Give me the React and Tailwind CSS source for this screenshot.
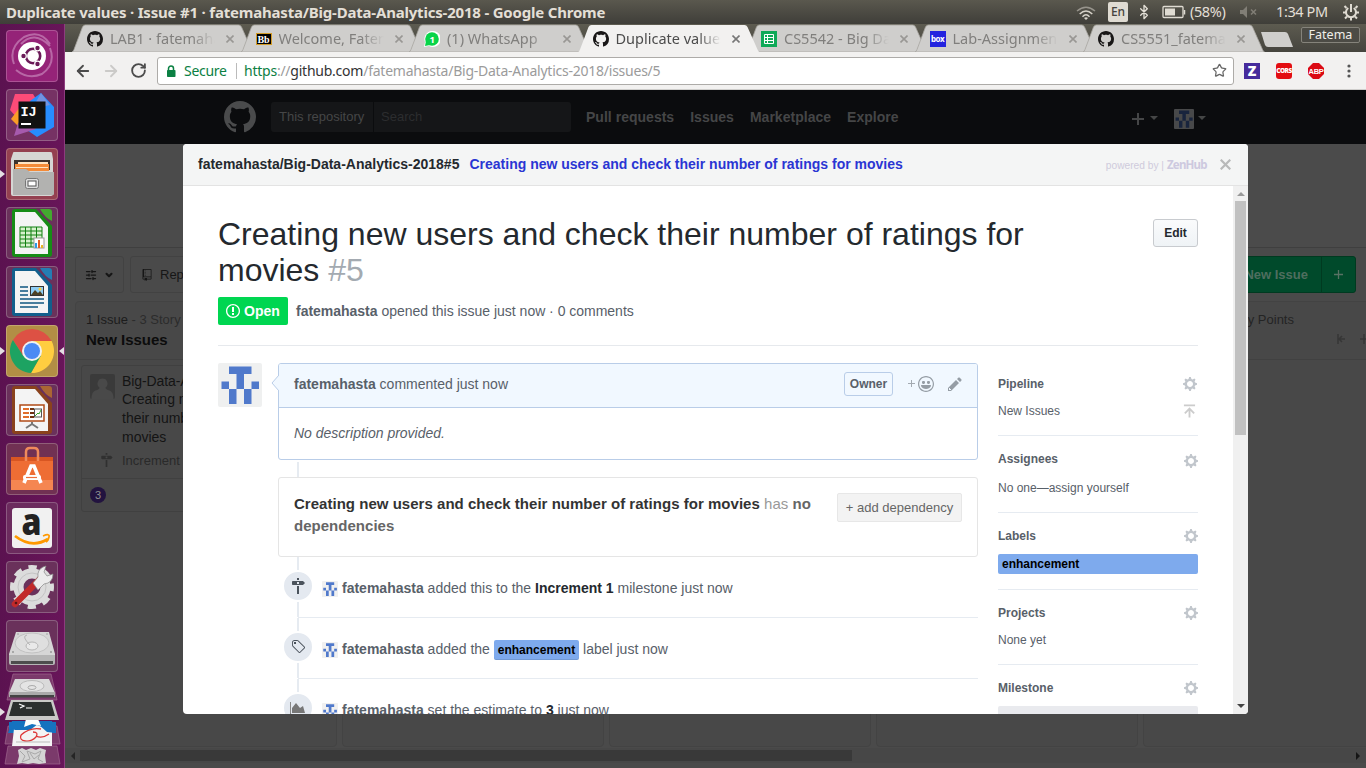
import React from "react";
import { Bluetooth, ArrowLeft, ArrowRight, RotateCw, Star, SlidersHorizontal, ChevronDown } from "lucide-react";

const UI = "font-['Noto_Sans',sans-serif]";

const PATHS = {
  github: "M8 0C3.58 0 0 3.58 0 8c0 3.54 2.29 6.53 5.47 7.59.4.07.55-.17.55-.38 0-.19-.01-.82-.01-1.49-2.01.37-2.53-.49-2.69-.94-.09-.23-.48-.94-.82-1.13-.28-.15-.68-.52-.01-.53.63-.01 1.08.58 1.23.82.72 1.21 1.87.87 2.33.66.07-.52.28-.87.51-1.07-1.78-.2-3.64-.89-3.64-3.95 0-.87.31-1.59.82-2.15-.08-.2-.36-1.02.08-2.12 0 0 .67-.21 2.2.82.64-.18 1.32-.27 2-.27.68 0 1.36.09 2 .27 1.53-1.04 2.2-.82 2.2-.82.44 1.1.16 1.92.08 2.12.51.56.82 1.27.82 2.15 0 3.07-1.87 3.75-3.65 3.95.29.25.54.73.54 1.48 0 1.07-.01 1.93-.01 2.2 0 .21.15.46.55.38A8.013 8.013 0 0 0 16 8c0-4.42-3.58-8-8-8z",
  issue: "M7 2.3c3.14 0 5.7 2.56 5.7 5.7s-2.56 5.7-5.7 5.7A5.71 5.71 0 0 1 1.3 8c0-3.14 2.56-5.7 5.7-5.7zM7 1C3.14 1 0 4.14 0 8s3.14 7 7 7 7-3.14 7-7-3.14-7-7-7zm1 3H6v5h2V4zm0 6H6v2h2v-2z",
  gear: "M14 8.77v-1.6l-1.94-.64-.45-1.09.88-1.84-1.13-1.13-1.81.91-1.09-.45-.69-1.92h-1.6l-.63 1.94-1.11.45-1.84-.88-1.13 1.13.91 1.81-.45 1.09L0 7.23v1.59l1.94.64.45 1.09-.88 1.84 1.13 1.13 1.81-.91 1.09.45.69 1.92h1.59l.63-1.94 1.11-.45 1.84.88 1.13-1.13-.92-1.81.47-1.09L14 8.75v.02zM7 11c-1.66 0-3-1.34-3-3s1.34-3 3-3 3 1.34 3 3-1.34 3-3 3z",
  milestone: "M8 2H6V0h2v2zm4 5H2c-.55 0-1-.45-1-1V4c0-.55.45-1 1-1h10l2 2-2 2zM8 4H6v2h2V4zM6 16h2V8H6v8z",
  tag: "M7.73 1.73C7.26 1.26 6.62 1 5.96 1H3.5C2.13 1 1 2.13 1 3.5v2.47c0 .66.27 1.3.73 1.77l6.06 6.06c.39.39 1.02.39 1.41 0l4.59-4.59a.996.996 0 0 0 0-1.41L7.73 1.73zM2.38 7.09c-.31-.3-.47-.7-.47-1.13V3.5c0-.88.72-1.59 1.59-1.59h2.47c.42 0 .83.16 1.13.47l6.14 6.13-4.73 4.73-6.13-6.15zM3.01 3h2v2H3V3h.01z",
  pencil: "M0 12v3h3l8-8-3-3-8 8zm3 2H1v-2h1v1h1v1zm10.3-9.3L12 6 9 3l1.3-1.3a.996.996 0 0 1 1.41 0l1.59 1.59c.39.39.39 1.02 0 1.41z",
  smiley: "M8 0C3.58 0 0 3.58 0 8s3.58 8 8 8 8-3.58 8-8-3.58-8-8-8zm4.81 12.81a6.72 6.72 0 0 1-2.17 1.45c-.83.36-1.72.53-2.64.53-.92 0-1.81-.17-2.64-.53-.81-.34-1.55-.83-2.17-1.45a6.773 6.773 0 0 1-1.45-2.17A6.59 6.59 0 0 1 1.21 8c0-.92.17-1.81.53-2.64.34-.81.83-1.55 1.45-2.17.62-.62 1.36-1.11 2.17-1.45A6.59 6.59 0 0 1 8 1.21c.92 0 1.81.17 2.64.53.81.34 1.55.83 2.17 1.45.62.62 1.11 1.36 1.45 2.17.36.83.53 1.72.53 2.64 0 .92-.17 1.81-.53 2.64-.34.81-.83 1.55-1.45 2.17zM4 6.8v-.59c0-.66.53-1.19 1.2-1.19h.59c.66 0 1.19.53 1.19 1.19v.59c0 .67-.53 1.2-1.19 1.2H5.2C4.53 8 4 7.47 4 6.8zm5 0v-.59c0-.66.53-1.19 1.2-1.19h.59c.66 0 1.19.53 1.19 1.19v.59c0 .67-.53 1.2-1.19 1.2h-.59C9.53 8 9 7.47 9 6.8zm4 3.2c-.72 1.88-2.91 3-5 3s-4.28-1.13-5-3c-.14-.39.23-1 .66-1h8.59c.41 0 .89.61.75 1z",
  repo: "M4 9H3V8h1v1zm0-3H3v1h1V6zm0-2H3v1h1V4zm0-2H3v1h1V2zm8-1v12c0 .55-.45 1-1 1H6v2l-1.5-1.5L3 16v-2H1c-.55 0-1-.45-1-1V1c0-.55.45-1 1-1h10c.55 0 1 .45 1 1zm-1 10H1v2h2v-1h3v1h5v-2zm0-10H2v9h9V1z",
};

function Octicon({ name, w = 14, className = "" }) {
  return (
    <svg viewBox={`0 0 ${w} 16`} className={`shrink-0 ${className}`} fill="currentColor">
      <path fillRule="evenodd" d={PATHS[name]} />
    </svg>
  );
}

function Identicon({ className = "", bg = "#f0f0f0", fg = "#5079cb" }) {
  return (
    <svg viewBox="0 0 44 44" className={`shrink-0 ${className}`}>
      <rect width="44" height="44" rx="2" fill={bg} />
      <path fill={fg} d="M11 3.500h22.500v7.500H26v15h7.500v-7.500H41V26h-7.500v15H26V26h-7.500v15H11V26H3.500v-7.500H11V26h7.500V11H11z" />
    </svg>
  );
}

/* ---------- desktop panel ---------- */

function TopBar() {
  return (
    <header className={`flex h-6 shrink-0 items-center bg-linear-to-b from-[#5a584e] to-[#3f3e39] text-[#e3dfd6] ${UI}`}>
      <h1 className="ml-1.5 w-[700px] text-[15px] leading-6 font-bold tracking-[-0.2px] whitespace-nowrap">
        Duplicate values · Issue #1 · fatemahasta/Big-Data-Analytics-2018 - Google Chrome
      </h1>
      <div className="ml-auto flex items-center pr-1.5 text-[14.500px]">
        <svg viewBox="0 0 20 14" className="mt-0.5 mr-3 h-3.5 w-5" fill="none" stroke="#d8d4cb" strokeWidth="1.500">
          <path d="M1 5Q10-2.500 19 5" stroke="#97948c" />
          <path d="M3.700 8Q10 2 16.300 8M6.500 10.700Q10 7 13.500 10.700" />
          <path d="M8 12L10 14L12 12Q10 10.500 8 12" fill="#d8d4cb" stroke="none" />
        </svg>
        <span className="mr-2 flex h-5 w-5 items-center justify-center rounded-xs bg-[#dfdbd2] text-[12px] font-medium text-[#45433e]">En</span>
        <Bluetooth className="mr-2.5 h-4 w-4 shrink-0" strokeWidth={2} />
        <svg viewBox="0 0 24 14" className="mr-1 h-3.5 w-6" fill="none" stroke="#dfdbd2">
          <rect x="1" y="1.500" width="20" height="11" rx="1" strokeWidth="1.300" />
          <path d="M22.500 5v4.500" strokeWidth="1.500" />
          <rect x="3" y="3.500" width="10" height="7" fill="#dfdbd2" stroke="none" />
        </svg>
        <span className="w-[38px] tracking-[-0.4px] whitespace-nowrap">(58%)</span>
        <svg viewBox="0 0 18 12" className="mr-[18px] ml-3 h-3 w-[18px]" fill="#817e76" stroke="#817e76">
          <path d="M0 4h3l4-4v12L3 8H0z" stroke="none" />
          <path d="M11 3.500l5 5m0-5l-5 5" strokeWidth="1.500" />
        </svg>
        <span className="w-[53px] tracking-[-0.4px] whitespace-nowrap">1:34 PM</span>
        <svg viewBox="0 0 18 18" className="ml-[13px] h-[18px] w-[18px]" fill="none" stroke="#dfdbd2">
          <path d="M6.300 5A5 5 0 1 0 11.700 5" strokeWidth="2" />
          <path d="M9 1v8" strokeWidth="2" />
          <path d="M2.500 3l2 2M15.500 3l-2 2M1 9.500h3M14 9.500h3M3 15.500l2-2M15 15.500l-2-2M9 14v3.500" strokeWidth="2" />
        </svg>
      </div>
    </header>
  );
}

function LauncherTile({ tint, children, left, right }) {
  return (
    <div className={`relative h-[52px] w-[52px] shrink-0 rounded-[4px] border border-[#ffffff38] ${tint}`}>
      <svg viewBox="0 0 52 52" className="-m-px h-[52px] w-[52px] max-w-none">{children}</svg>
      {left && <svg viewBox="0 0 5 8" className="absolute top-[21px] -left-[7px] h-2 w-[5px]"><path d="M0 0l5 4l-5 4z" fill="#e4dfe3" /></svg>}
      {right && <svg viewBox="0 0 5 8" className="absolute top-[21px] -right-[7px] h-2 w-[5px]"><path d="M5 0L0 4l5 4z" fill="#e4dfe3" /></svg>}
    </div>
  );
}

function DocShape({ main, fold, children }) {
  return (
    <>
      <path d="M9 2h21l16 17v28a3 3 0 0 1-3 3H9a3 3 0 0 1-3-3V5a3 3 0 0 1 3-3z" fill={main} />
      <path d="M9 5h20l13 15v27H9z" fill="#f4f4f4" />
      <path d="M34 2h9a3 3 0 0 1 3 3v9q-7-3-12-12z" fill={fold} />
      {children}
    </>
  );
}

function Disk() {
  return (
    <g>
      <path d="M10 12h33l6 22v6H3v-6z" fill="#d6d6d6" />
      <path d="M3 35h46v8q0 2-2 2H5q-2 0-2-2z" fill="#b5b5b5" />
      <path d="M5 41h42v3H5z" fill="#4d4d4d" />
      <ellipse cx="26" cy="23" rx="17" ry="10" fill="#dfdfdf" stroke="#c2c2c2" />
      <ellipse cx="26" cy="26" rx="6" ry="4" fill="#e9e9e9" stroke="#b5b5b5" />
      <path d="M24 25q-9-9-3-10" fill="none" stroke="#b5b5b5" />
      <g fill="#999"><circle cx="12" cy="14" r=".8" /><circle cx="41" cy="14" r=".8" /><circle cx="7" cy="32" r="1" /><circle cx="45" cy="32" r="1" /></g>
    </g>
  );
}

function Launcher() {
  return (
    <nav className="relative flex w-[65px] shrink-0 flex-col gap-[7px] overflow-hidden border-r border-[#8d3c7e] bg-linear-to-r from-[#5b1250] to-[#681559] pt-1.5 pl-1.5">
      <LauncherTile tint="bg-[#952378]">
        <g fill="none" stroke="#c885b9" strokeWidth="2" opacity=".7"><path d="M8 34Q2 18 18 7Q34-1 44 14M44 18Q50 34 36 44Q22 50 10 40M15 14Q28 0 44 16" /></g>
        <circle cx="26" cy="26" r="14" fill="#fff" />
        <circle cx="27" cy="26" r="7.200" fill="none" stroke="#6b1a58" strokeWidth="2.600" />
        <g fill="#6b1a58" stroke="#fff" strokeWidth="1.200"><circle cx="17.500" cy="26" r="2.800" /><circle cx="31.500" cy="18" r="2.800" /><circle cx="31.500" cy="34" r="2.800" /></g>
      </LauncherTile>
      <LauncherTile tint="bg-[#763264]">
        <path d="M9 5l18 0 6 10-20 16-9-10z" fill="#fd4b78" /><path d="M5 30l9-12 8 8-10 11z" fill="#f99d27" />
        <path d="M35 4l13 14v20l-17 10-14-10 7-26z" fill="#278dff" /><path d="M12 34l10-4 8 10-22 7z" fill="#a65aad" />
        <path d="M35 4l9 12-18 4z" fill="#7492df" />
        <rect x="12.500" y="12.500" width="27" height="27" fill="#111" />
        <text x="14.500" y="27" fontSize="13.500" fontWeight="700" fontFamily="Liberation Mono, monospace" fill="#fff">IJ</text><path d="M15 35h10" stroke="#fff" strokeWidth="2" />
      </LauncherTile>
      <LauncherTile tint="bg-[#944050]" left>
        <path d="M7 5q0-1 1-1h36q2 0 2 1l1 6v35q0 2-2 2H7q-2 0-2-2V11z" fill="#d6d6d4" />
        <path d="M8 12h36v10H8z" fill="#3b322d" /><path d="M9 16h34v7H9z" fill="#f48b38" /><path d="M12 14h30v2H12zM10 19h32v1H10z" fill="#ffe4c2" />
        <path d="M7 21h13l4 3h24v22q0 1-1 1H7z" fill="#b2b2b0" />
        <rect x="19.500" y="30.500" width="13" height="10" rx="2" fill="#ddd" stroke="#777" /><rect x="22" y="33" width="8" height="5" fill="#fff" stroke="#555" />
      </LauncherTile>
      <LauncherTile tint="bg-[#6a315b]">
        <DocShape main="#168c16" fold="#43a92f">
          <path d="M14 20h22v20H14z" fill="#d7f1cd" /><path d="M14 20h22v20H14zM19.500 20v20M25 20v20M30.500 20v20M14 24h22M14 28h22M14 32h22M14 36h22" stroke="#118011" fill="none" />
          <rect x="28" y="31" width="10" height="10" fill="#fff" stroke="#999" /><path d="M29 36h2v5h-2z" fill="#2b9ae5" /><path d="M32 33h2v8h-2z" fill="#e26025" /><path d="M35 38h2v3h-2z" fill="#e8b52a" />
        </DocShape>
      </LauncherTile>
      <LauncherTile tint="bg-[#6a315b]">
        <DocShape main="#125f8c" fold="#257db3">
          <path d="M14 21h8M14 25h8M14 29h8M14 33h24M14 37h24M14 41h18" stroke="#0f5580" strokeWidth="1.700" />
          <rect x="24.500" y="20.500" width="13" height="9" fill="#8fcdf4" stroke="#333" /><path d="M25 29l4-5 3 3 2-2 3 4z" fill="#4d4023" /><circle cx="34" cy="23" r="1.500" fill="#ffd034" />
        </DocShape>
      </LauncherTile>
      <LauncherTile tint="bg-[#b28e45]" left right>
        <path d="M26 16H45.600A22 22 0 0 1 25 48L34.700 31z" fill="#ffcd40" /><path d="M17.300 31L7 15A22 22 0 0 1 45.600 16H26z" fill="#dd5144" />
        <path d="M17.300 31L6.900 15A22 22 0 0 0 25 48L34.700 31z" fill="#1da362" />
        <circle cx="26" cy="26" r="10" fill="#f1f1f1" /><circle cx="26" cy="26" r="8" fill="#4a8af4" />
      </LauncherTile>
      <LauncherTile tint="bg-[#6a315b]">
        <DocShape main="#8a421d" fold="#aa6634">
          <rect x="14" y="21" width="24" height="16" fill="#fff" stroke="#b04b17" strokeWidth="1.500" /><path d="M17 25h6M17 29h6M17 33h6" stroke="#e16f2c" strokeWidth="2" />
          <path d="M24 25h4M24 29h4M24 33h4" stroke="#713313" strokeWidth="2" /><rect x="28.500" y="25" width="7" height="8" fill="#fff" stroke="#555" /><path d="M29 32l3-3 1 1 2-4" stroke="#3aa832" fill="none" /><path d="M26 38v2l-6 4m6-4l6 4" stroke="#777" strokeWidth="2" fill="none" />
        </DocShape>
      </LauncherTile>
      <LauncherTile tint="bg-[#713153]">
        <path d="M5 14h42v33H5z" fill="#ee6d34" /><path d="M5 37h42v10H5z" fill="#f58651" /><path d="M5 14h42v4H5z" fill="#d85622" />
        <path d="M20 18V9q0-4 4-4h4q4 0 4 4v9" fill="none" stroke="#f08a5c" strokeWidth="2.500" />
        <path d="M18 40l7-17h3l7 17" fill="none" stroke="#fff" strokeWidth="3.600" /><rect x="17" y="32" width="18" height="5" rx="2" fill="#fff" /><path d="M20 34.500h11" stroke="#ed6f3b" strokeWidth="1.200" />
      </LauncherTile>
      <LauncherTile tint="bg-[#6c2b5e]">
        <rect x="6" y="6" width="40" height="40" rx="3" fill="#f1f1f1" />
        <text x="15.500" y="33" fontFamily="Open Sans, sans-serif" fontWeight="800" fontSize="37" textLength="20" lengthAdjust="spacingAndGlyphs" fill="#222">a</text>
        <path d="M9 34q17 13 33 3" fill="none" stroke="#f90" strokeWidth="2.700" /><path d="M37 34q7-3 6 1q-1 4-3 5" fill="none" stroke="#f90" strokeWidth="1.700" />
      </LauncherTile>
      <LauncherTile tint="bg-[#6a315b]">
        <circle cx="26" cy="26" r="13.500" fill="none" stroke="#dcdcdc" strokeWidth="10" /><circle cx="26" cy="26" r="19" fill="none" stroke="#dcdcdc" strokeWidth="6" strokeDasharray="8 6.920" strokeDashoffset="4" />
        <circle cx="26" cy="26" r="14" fill="none" stroke="#c4c4c4" />
        <path d="M9 43L35 17" stroke="#c22a2a" strokeWidth="6.500" strokeLinecap="round" /><path d="M27 22l5-6q-1-7 5-10l3-1-2 6 3 4 6-2q0 9-9 10l-6 6z" fill="#ececec" stroke="#888" strokeWidth=".7" /><circle cx="10" cy="42" r="1.300" fill="#571313" />
      </LauncherTile>
      <LauncherTile tint="bg-[#6a315b]"><Disk /></LauncherTile>
      <svg viewBox="0 0 66 96" className="-mt-1.5 -ml-1.5 h-24 w-[66px] max-w-none shrink-0">
        <g fill="#7b3a6b" stroke="#a0698f" strokeWidth=".7"><path d="M13 1h38l6 26H7z" /><path d="M8 53h49l3 18H5z" /><path d="M8 73h49l3 18H5z" /></g>
        <path d="M15 6h34l6 14v3H9v-3z" fill="#dadada" /><path d="M9 19h46v5H9z" fill="#aaa" /><path d="M10 22h44v2.500H10z" fill="#444" /><ellipse cx="32" cy="13" rx="12" ry="5.500" fill="#e4e4e4" stroke="#bbb" /><ellipse cx="32" cy="14.500" rx="4" ry="2" fill="none" stroke="#aaa" />
        <path d="M12 48h40l4 12H8z" fill="#1672bf" /><path d="M9 49l46 0 1 10-9-2-7 4-9-6-14 4-8-3z" fill="#1672bf" />
        <path d="M14 56l18-6 20 8v15H12z" fill="#f4f4f4" /><path d="M9 49h47l0 11-9-1-9-8-8 6-15 0-6-3z" fill="#1672bf" /><path d="M26 46h12l3 7-9-2-8 3z" fill="#fff" />
        <path d="M21 62q9-8 20-6m-20 6q-2 5 4 6t11-4q3-5-3-5m3 4q6 3 13-2" fill="none" stroke="#dd3535" strokeWidth="1.300" /><path d="M16 69h34" stroke="#bbb" />
        <path d="M11 27h42l6 20H5z" fill="#c9c9c7" /><path d="M13 29h38l4 14H9z" fill="#2c302f" /><path d="M19 31l5 2-4 2M26 35h6" stroke="#fff" strokeWidth="1.200" fill="none" />
        <path d="M18 77l4-2 4 2 5-2 5 2 4-2 6 2-1 5 1 8-7 1-6-1-5 1-6-1-5 1 2-8z" fill="#d4d4d4" /><path d="M20 78l5 5-3 6 8-3-3-8 8 3 6-3-3 8 5 3M30 80l4 6 5-4" fill="none" stroke="#a8a8a8" />
      </svg>
      <svg viewBox="0 0 5 8" className="absolute top-[684px] left-0 h-2 w-[5px]"><path d="M0 0l5 4l-5 4z" fill="#e4dfe3" /></svg>
    </nav>
  );
}

/* ---------- browser chrome ---------- */

const Favicons = {
  github: <Octicon name="github" w={16} className="h-4 w-4 text-[#191717]" />,
  bb: <span className="flex h-3 w-4 items-center justify-center border border-[#d39c27] bg-black font-['Liberation_Serif',serif] text-[10px] font-bold text-white">Bb</span>,
  wa: <svg viewBox="0 0 16 16" className="h-4 w-4"><path d="M8 0a8 8 0 1 1-3 15L0 16l1-5A8 8 0 0 1 8 0z" fill="#fff" /><circle cx="8" cy="8" r="6.800" fill="#08d449" /><path d="M2 10l-1 5 5-1z" fill="#08d449" /><text x="5.400" y="11.500" fontSize="9.500" fontWeight="700" fill="#fff" fontFamily="Noto Sans, sans-serif">1</text></svg>,
  sheets: <svg viewBox="0 0 16 16" className="h-4 w-4"><path d="M0 0h16v16H0z" fill="#0fa958" /><path d="M3.500 3.500h9v9h-9zM3.500 6.500h9M3.500 9.500h9M6.500 3.500v9" stroke="#fff" fill="none" /></svg>,
  box: <span className="flex h-4 w-4 items-center justify-center bg-[#2323df] text-[8px] font-bold tracking-[-0.5px] text-white">box</span>,
};

const TABS = [
  { icon: "github", title: "LAB1 · fatemahasta" },
  { icon: "bb", title: "Welcome, Fatema" },
  { icon: "wa", title: "(1) WhatsApp" },
  { icon: "github", title: "Duplicate values", active: true },
  { icon: "sheets", title: "CS5542 - Big Data" },
  { icon: "box", title: "Lab-Assignment" },
  { icon: "github", title: "CS5551_fatemah" },
];

function Tab({ tab }) {
  return (
    <div className={`relative -mr-[13px] flex h-7 w-[181.500px] shrink-0 items-center ${tab.active ? "z-10" : ""}`}>
      <svg viewBox="0 0 181.500 28" className="absolute inset-0 h-7 w-full">
        <path d="M0 28Q1 28 2 25.500L10.500 3Q11.500 1 13.500 1H166.500Q168.500 1 169.500 3L179.500 25.500Q180.500 28 181.500 28z" fill={tab.active ? "#f2f1f0" : "#cfcecc"} stroke="#a8a6a1" strokeWidth={tab.active ? "0" : ".8"} />
      </svg>
      <span className="relative mt-0.5 ml-[15px] flex w-4 shrink-0">{Favicons[tab.icon]}</span>
      <span className={`relative mt-0.5 ml-[7px] w-[108px] overflow-hidden text-[14.500px] tracking-[0px] whitespace-nowrap ${tab.active ? "text-[#4c4c4c]" : "text-[#807f7d]"} [mask-image:linear-gradient(to_right,black_76%,transparent_97%)]`}>
        {tab.title}
      </span>
      <svg viewBox="0 0 8 8" className="relative mt-0.5 ml-2 h-2 w-2"><path d="M.5.500l7 7m0-7l-7 7" stroke={tab.active ? "#777" : "#999794"} strokeWidth="1.600" /></svg>
    </div>
  );
}

function BrowserChrome() {
  return (
    <div className={`shrink-0 ${UI}`}>
      <div className="flex h-7 bg-linear-to-b from-[#5d5b50] to-[#45443e] pl-[7px]">
        {TABS.map((t, i) => <Tab key={i} tab={t} />)}
        <svg viewBox="0 0 34 16" className="mt-2 ml-2 h-4 w-[34px] shrink-0"><path d="M1 0H25Q27 0 28 2L33 15H8Q6 15 5 13z" fill="#cfcecc" /></svg>
        <span className="mt-[3px] mr-1.5 ml-auto flex h-4 w-[59px] items-center justify-center rounded-xs border border-[#85837b] bg-[#4c4b45] text-[12.500px] text-[#f0eee9]">Fatema</span>
      </div>
      <div className="flex h-[38px] items-center border-b border-[#cfcecc] bg-[#f2f1f0] pl-[9px]">
        <ArrowLeft className="h-[18px] w-[18px] text-[#4b4b4b]" strokeWidth={2.400} />
        <ArrowRight className="ml-2.5 h-[18px] w-[18px] text-[#cbcac8]" strokeWidth={2.400} />
        <RotateCw className="ml-[10px] h-[17px] w-[17px] text-[#4b4b4b]" strokeWidth={2.600} />
        <div className="ml-[10px] flex h-7 w-[1077px] items-center rounded-[3px] border border-[#adaba8] bg-white pl-2 text-[14px]">
          <svg viewBox="0 0 10 12" className="h-3 w-[10px]"><path d="M2.500 6V3.500a2.500 2.500 0 0 1 5 0V6" fill="none" stroke="#0b8043" strokeWidth="1.500" /><rect x="1" y="5" width="8.500" height="7" rx=".8" fill="#0b8043" /></svg>
          <span className="ml-2 w-[44px] tracking-[-0.3px] text-[#0b8043]">Secure</span>
          <span className="mr-[7px] ml-2 h-4 w-px bg-[#bbb]" />
          <span className="tracking-[-0.24px] text-[#9b9b9b]">
            <span className="text-[#0b8043]">https</span>://<span className="text-[#333]">github.com</span>/fatemahasta/Big-Data-Analytics-2018/issues/5
          </span>
          <Star className="mr-1.5 ml-auto h-[15px] w-[15px] text-[#666]" />
        </div>
        <span className="ml-2.5 flex h-4 w-4 items-center justify-center bg-[#462b9c] text-[14px] font-black text-white">Z</span>
        <span className="ml-4 flex h-4 w-4 items-center justify-center rounded-[3px] bg-[#e30d12] font-['Open_Sans',sans-serif] text-[6.500px] font-extrabold tracking-[-0.5px] text-white">CORS</span>
        <svg viewBox="0 0 16 16" className="ml-4 h-4 w-4"><path d="M5 0h6l5 5v6l-5 5H5l-5-5V5z" fill="#db0a14" /><text x="8" y="10.800" textAnchor="middle" fontSize="7.500" fontWeight="700" letterSpacing="-.3" fill="#fff" fontFamily="Liberation Sans, sans-serif">ABP</text></svg>
        <svg viewBox="0 0 4 14" className="ml-[23px] h-3.5 w-1"><g fill="#555"><circle cx="2" cy="2" r="1.600" /><circle cx="2" cy="7" r="1.600" /><circle cx="2" cy="12" r="1.600" /></g></svg>
      </div>
    </div>
  );
}

/* ---------- dimmed page ---------- */

function Caret({ className = "" }) {
  return <span className={`block h-0 w-0 border-x-4 border-t-4 border-x-transparent border-t-[#454646] ${className}`} />;
}

function SiteHeader() {
  return (
    <div className="flex h-[54px] shrink-0 items-center bg-[#0b0c0e] pl-[159px] text-[14px] text-[#454647]">
      <Octicon name="github" w={16} className="h-8 w-8 text-[#4a4b4c]" />
      <div className="ml-[15px] flex h-[30px] w-[300px] items-center rounded-[3px] bg-[#151618] text-[13px]">
        <span className="flex h-full w-[103px] items-center border-r border-[#0b0c0e] pl-2 whitespace-nowrap">This repository</span>
        <span className="pl-[7px] text-[#2c2d2f]">Search</span>
      </div>
      <div className="ml-[15px] flex gap-4 font-bold tracking-[0.02px] whitespace-nowrap"><span>Pull requests</span><span>Issues</span><span>Marketplace</span><span>Explore</span></div>
      <svg viewBox="0 0 12 12" className="mt-1 ml-[233px] h-3 w-3"><path d="M6 0v12M0 6h12" stroke="#454647" strokeWidth="2" /></svg>
      <Caret className="mt-0.5 ml-1.5" />
      <Identicon className="mt-1 ml-4 h-5 w-5" bg="#48494a" fg="#18243d" />
      <Caret className="mt-0.5 ml-1" />
    </div>
  );
}

function FirstColumn() {
  return (
    <>
      <div className="border-b border-[#414141] px-2.5 pt-2 pb-[9px]">
        <p className="text-[13px] leading-5 text-[#1c1c1c]">1 Issue <span className="text-[#2c2c2c]">- 3 Story Points</span></p>
        <h2 className="text-[15px] leading-5 font-bold text-[#0c0c0c]">New Issues</h2>
      </div>
      <div className="mx-[5px] mt-[5px] h-[147px] rounded-[3px] border border-[#404040]">
        <div className="flex h-[113px] border-b border-[#404040] pt-1.5 pl-2">
          <svg viewBox="0 0 25 25" className="mt-0.5 h-[25px] w-[25px] shrink-0"><rect width="25" height="25" rx="2" fill="#3a3a3a" /><path d="M12.500 4.500a5 5 0 0 1 3 9q0 2 4 3t4 8.500H1.500q0-7.500 4-8.500t4-3a5 5 0 0 1 3-9z" fill="#494949" /></svg>
          <div className="ml-[7px] text-[14px] leading-[19px] text-[#141414]">
            <p className="leading-[18px] tracking-[-0.1px] whitespace-nowrap">Big-Data-Analytics</p>
            <p>Creating new users</p><p>their number of</p><p>movies</p>
            <p className="relative mt-1 text-[13px] text-[#2a2a2a]">
              <Octicon name="milestone" className="absolute top-[2px] -left-[22px] h-[14px] w-[13px] text-[#303030]" />Increment 1
            </p>
          </div>
        </div>
        <span className="mt-[8px] ml-2 flex h-4 w-4 items-center justify-center rounded-full bg-[#22133f] text-[11px] text-[#8f8f8f]">3</span>
      </div>
    </>
  );
}

function Board() {
  return (
    <div className="flex min-h-0 flex-1 flex-col bg-[#4a4a4a]">
      <div className="h-[104px] shrink-0 border-b border-[#3f3f3f] bg-[#4b4b4b]" />
      <div className="flex h-[53px] shrink-0 items-start pt-2 pl-2.5">
        <span className="flex h-[37px] w-[49px] items-center justify-center gap-[7px] rounded-[3px] border border-[#424242] text-[#161616]"><SlidersHorizontal className="h-3 w-3" strokeWidth={2.500} /><ChevronDown className="h-2.5 w-2.5" strokeWidth={5} /></span>
        <span className="ml-1.5 flex h-[37px] w-[180px] items-center gap-2 rounded-[3px] border border-[#424242] pl-[11px] text-[13px] text-[#161616]"><Octicon name="repo" w={12} className="h-3 w-[10px]" />Repos</span>
        <span className="mr-2.5 ml-auto flex h-[37px] w-[134px] rounded-[3px] border border-[#003a20] bg-[#004a2b] text-[13px] font-bold text-[#4f6e5f]">
          <span className="flex flex-1 items-center justify-end border-r border-[#003a20] pr-[13px]">New Issue</span>
          <span className="flex w-[33px] items-center justify-center"><svg viewBox="0 0 9 9" className="h-[9px] w-[9px]"><path d="M4.500 0v9M0 4.500h9" stroke="#587264" strokeWidth="1.300" /></svg></span>
        </span>
      </div>
      <div className="flex h-[446px] shrink-0 gap-[5px] overflow-hidden pl-2.5">
        <section className="w-[262px] shrink-0 overflow-hidden rounded-[4px] border border-[#434343] bg-[#484848]"><FirstColumn /></section>
        {[0, 1, 2].map((i) => <section key={i} className="w-[262px] shrink-0 rounded-[4px] border border-[#434343] bg-[#484848]" />)}
        <section className="w-[262px] shrink-0 rounded-[4px] border border-[#434343] bg-[#484848]">
          <div className="flex h-[58px] border-b border-[#414141] pt-2">
            <span className="w-[150px] text-right text-[13px] leading-5 text-[#242424]">0 Issues - 0 Story Points</span>
            <svg viewBox="0 0 32 10" className="mt-6 ml-[43px] h-2.5 w-8" fill="none" stroke="#363636" strokeWidth="1.500"><path d="M1 0v10M8 5H2M5 2L2 5l3 3M23 5h6M27 0v10" /></svg>
          </div>
        </section>
      </div>
      <div className="mt-px flex h-[15px] shrink-0 items-center justify-between bg-[#474747] px-1.5">
        <span className="h-0 w-0 border-y-4 border-r-4 border-y-transparent border-r-[#252525]" />
        <span className="mr-auto ml-[5px] h-[11px] w-[772px] bg-[#393939]" />
        <span className="h-0 w-0 border-y-4 border-l-4 border-y-transparent border-l-[#151515]" />
      </div>
    </div>
  );
}

/* ---------- issue dialog ---------- */

function Comment() {
  return (
    <div className="relative ml-4 h-[97px] w-[700px] rounded-[3px] border border-[#b9cde8]">
      <svg viewBox="0 0 8 16" className="absolute top-[11px] -left-2 h-4 w-2"><path d="M8 0L1 8l7 8" fill="#f1f8ff" stroke="#b9cde8" /></svg>
      <div className="flex h-11 items-center rounded-t-[2px] border-b border-[#b9cde8] bg-[#f1f8ff] px-[15px] text-[14px] text-[#586069]">
        <p className="-mt-0.5"><b>fatemahasta</b> commented just now</p>
        <span className="ml-auto flex h-6 w-[49px] -translate-y-0.5 items-center justify-center rounded-[3px] border border-[#b9cde8] text-[12px] font-bold">Owner</span>
        <svg viewBox="0 0 7 7" className="mr-[3px] ml-[15px] h-[7px] w-[7px] -translate-y-0.5"><path d="M3.500 0v7M0 3.500h7" stroke="#a3aab1" /></svg>
        <Octicon name="smiley" w={16} className="h-4 w-4 -translate-y-0.5 text-[#959da5]" />
        <Octicon name="pencil" className="ml-[14px] h-4 w-3.5 -translate-y-0.5 text-[#959da5]" />
      </div>
      <p className="px-[15px] pt-[15px] text-[14px] leading-[21px] text-[#586069] italic">No description provided.</p>
    </div>
  );
}

function TimelineEvent({ icon, children, last }) {
  return (
    <div className={`relative ml-5 flex h-[61px] pt-[21px] ${last ? "" : "border-b border-[#e6ebf1]"}`}>
      <div className="absolute inset-y-0 left-[-1px] w-0.5 bg-[#e6ebf1]" />
      <span className="relative -ml-4 flex h-8 w-8 -translate-y-2 items-center justify-center rounded-full border-2 border-white bg-[#e4e9f0] text-[#4b535c]">{icon}</span>
      <div className="ml-2 flex h-5 items-center text-[14px] whitespace-nowrap text-[#586069]">
        <Identicon className="mt-0.5 mr-1 h-4 w-4" />
        <p className="leading-5"><b>fatemahasta</b> {children}</p>
      </div>
    </div>
  );
}

function SideItem({ title, cls, gear = "", children }) {
  return (
    <section className={`border-b border-[#e6ebf1] text-[12px] text-[#586069] ${cls}`}>
      <div className="flex items-center justify-between"><h3 className="leading-[18px] font-bold">{title}</h3><Octicon name="gear" className={`h-4 w-3.5 text-[#c1c6cc] ${gear}`} /></div>
      {children}
    </section>
  );
}

function IssueDialog() {
  return (
    <div role="dialog" className="absolute top-[54px] left-[118px] flex h-[570px] w-[1065px] flex-col overflow-hidden rounded-[4px] bg-white">
      <div className="flex h-[42px] shrink-0 items-center border-b border-[#e3e3e3] bg-[#f4f5f5] pr-[17px] pb-px pl-[15px] text-[14px] font-bold whitespace-nowrap">
        <span className="text-[#24292e]">fatemahasta/Big-Data-Analytics-2018#5</span>
        <span className="ml-2.5 text-[#2a35d3]">Creating new users and check their number of ratings for movies</span>
        <span className="mt-[3px] ml-auto text-[10.200px] font-normal text-[#cfcbdc]">powered by |</span>
        <span className={`mt-px ml-[3px] w-10 text-[11.500px] tracking-[-0.8px] text-[#cdc9df] ${UI}`}>ZenHub</span>
        <svg viewBox="0 0 11 11" className="ml-[13px] h-[11px] w-[11px]"><path d="M.7.700l9.600 9.600m0-9.600L.7 10.300" stroke="#b8b9b9" strokeWidth="2.200" /></svg>
      </div>
      <div className="flex min-h-0 flex-1">
        <div className="min-w-0 flex-1 overflow-hidden pt-[30px] pl-[35px]">
          <div className="flex w-[980px] items-start justify-between">
            <h1 className="w-[870px] text-[32px] leading-9 text-[#24292e]">Creating new users and check their number of ratings for movies <span className="text-[#a3aab1]">#5</span></h1>
            <button className="mt-[3px] h-7 w-[45px] rounded-[3px] border border-[#c8cbcf] bg-linear-to-b from-[#fafbfc] to-[#eff3f6] text-[12px] font-bold text-[#24292e]">Edit</button>
          </div>
          <div className="mt-[9px] flex w-[980px] items-center border-b border-[#e6e9ed] pb-5 text-[14px] text-[#586069]">
            <span className="flex h-7 w-[70px] items-center rounded-[2px] bg-[#00d651] pl-2 font-bold text-white"><Octicon name="issue" className="mr-1 h-4 w-3.5" />Open</span>
            <p className="ml-2 tracking-[-0.015px]"><b>fatemahasta</b> opened this issue just now · 0 comments</p>
          </div>
          <div className="flex w-[980px] pt-[17px]">
            <div className="w-[760px] shrink-0">
              <div className="flex"><Identicon className="h-11 w-11" bg="#eff0f0" /><Comment /></div>
              <div className="ml-[79px] h-[17px] w-0.5 border-t-2 border-white bg-[#e6ebf1]" />
              <div className="ml-[60px] flex h-20 w-[700px] items-start justify-between rounded-[3px] border border-[#e5e5e5] p-[15px]">
                <p className="w-[525px] text-[15px] leading-[22px] font-bold tracking-[0.025px] text-[#666]"><span className="text-[#333]">Creating new users and check their number of ratings for movies</span> <span className="font-normal text-[#999]">has</span> no dependencies</p>
                <span className="flex h-[29px] w-[125px] items-center justify-center rounded-[2px] border border-[#e7e7e7] bg-[#f3f3f3] text-[13px] text-[#666]">+ add dependency</span>
              </div>
              <div className="ml-[60px]">
                <TimelineEvent icon={<Octicon name="milestone" className="h-4 w-3.5" />}>added this to the <b className="text-[#24292e]">Increment 1</b> milestone just now</TimelineEvent>
                <TimelineEvent icon={<Octicon name="tag" className="h-4 w-3.5" />}>added the <span className="inline-flex h-5 items-center rounded-[2px] bg-[#7eaaed] px-1 text-[12px] font-bold text-black shadow-[inset_0_-1px_0_rgba(27,31,35,0.12)]">enhancement</span> label just now</TimelineEvent>
                <TimelineEvent last icon={<svg viewBox="0 0 16 13" className="h-[13px] w-4"><path d="M.5 0v12.500H16" stroke="#888" fill="none" /><path d="M2 11V6l4-5 4 5 3-2 2 7z" fill="#777" /></svg>}>set the estimate to <b className="text-[#24292e]">3</b> just now</TimelineEvent>
              </div>
            </div>
            <aside className="ml-5 w-[200px] shrink-0">
              <SideItem title="Pipeline" cls="h-[73px] pt-3" gear="mr-px">
                <div className="mt-[9px] flex items-center justify-between leading-[18px]"><span>New Issues</span><svg viewBox="0 0 14 14" className="mr-0.5 h-[14px] w-[13px]"><path d="M1 1h12M7 14V5M2 9.500L7 4.500l5 5" stroke="#ccc" strokeWidth="2" fill="none" /></svg></div>
              </SideItem>
              <SideItem title="Assignees" cls="h-[77px] pt-[14px]" gear="translate-y-0.5"><p className="mt-[11px] leading-[18px]">No one—assign yourself</p></SideItem>
              <SideItem title="Labels" cls="h-[77px] pt-[14px]"><p className="mt-[9px] h-5 rounded-[2px] bg-[#7eaaed] pl-1 leading-5 font-bold text-black">enhancement</p></SideItem>
              <SideItem title="Projects" cls="h-[75px] pt-[14px]"><p className="mt-[9px] leading-[18px]">None yet</p></SideItem>
              <SideItem title="Milestone" cls="h-[90px] pt-[14px]"><div className="mt-[9px] h-2.5 rounded-[2px] bg-[#e9eaee]" /></SideItem>
            </aside>
          </div>
        </div>
        <div className="flex w-[15px] shrink-0 flex-col items-center bg-[#f0f0f0]">
          <span className="mt-1.5 h-0 w-0 border-x-4 border-b-4 border-x-transparent border-b-[#999]" />
          <span className="mt-[5px] h-[234px] w-[11px] bg-[#c1c1c1]" />
          <span className="mt-auto mb-1.5 h-0 w-0 border-x-4 border-t-4 border-x-transparent border-t-[#444]" />
        </div>
      </div>
    </div>
  );
}

export default function App() {
  return (
    <div className="flex h-[768px] w-[1366px] flex-col overflow-hidden font-['Liberation_Sans',sans-serif]">
      <TopBar />
      <div className="flex min-h-0 flex-1">
        <Launcher />
        <div className="flex min-w-0 flex-1 flex-col">
          <BrowserChrome />
          <main className="relative flex min-h-0 flex-1 flex-col bg-[#4a4a4a]">
            <SiteHeader />
            <Board />
            <IssueDialog />
          </main>
        </div>
      </div>
    </div>
  );
}
